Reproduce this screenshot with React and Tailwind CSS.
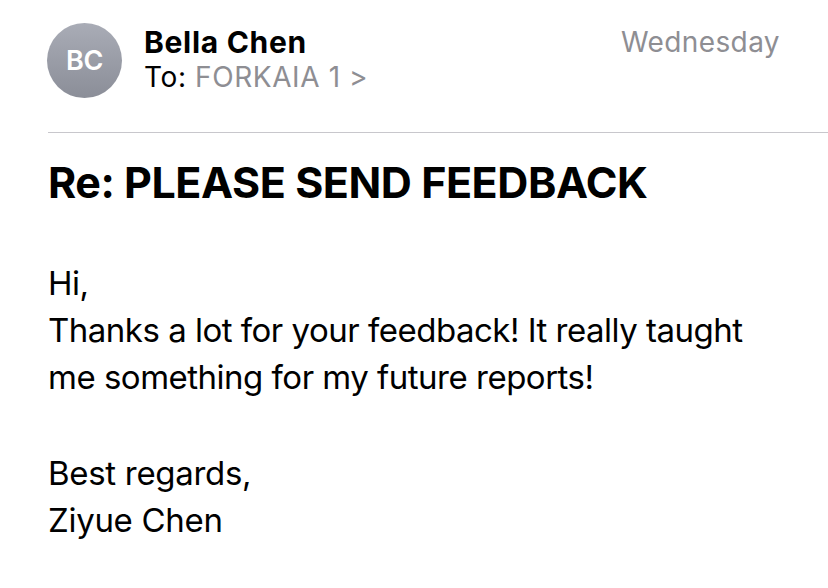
import React from "react";

export default function App() {
  return (
    <div className="w-[828px] h-[588px] bg-white overflow-hidden text-black" style={{ fontFamily: "Inter, 'Noto Sans', sans-serif" }}>
      <div className="flex items-start pl-[47px] pr-[48px] pt-[23px]">
        <div className="w-[75px] h-[75px] rounded-full bg-gradient-to-b from-[#a9acb6] to-[#8b8e98] flex items-center justify-center shrink-0">
          <span className="text-white text-[27px] font-semibold tracking-[-0.3px] leading-none">BC</span>
        </div>
        <div className="ml-[22px] flex-1 flex flex-col">
          <div className="text-[30px] font-bold leading-[30px] mt-[4px] tracking-[0.7px]">Bella Chen</div>
          <div className="text-[28px] leading-[28px] mt-[6px] tracking-[0.6px]">
            <span>To: </span>
            <span className="text-[#8e8e93]">FORKAIA 1 </span>
            <span className="text-[#8e8e93]">&gt;</span>
          </div>
        </div>
        <div className="text-[28px] leading-[28px] text-[#8e8e93] mt-[5px] tracking-[0.4px]">Wednesday</div>
      </div>
      <div className="ml-[48px] mt-[34px] h-px bg-[#c8c7cc]" />
      <div className="pl-[48px]">
        <div className="text-[43px] font-bold leading-[43px] mt-[28px] tracking-[-0.45px]">Re: PLEASE SEND FEEDBACK</div>
        <div className="mt-[56px] text-[33px] leading-[47px] tracking-[-0.5px]">
          <div>Hi,</div>
          <div>Thanks a lot for your feedback! It really taught</div>
          <div>me something for my future reports!</div>
        </div>
        <div className="mt-[49px] text-[33px] leading-[47px] tracking-[-0.3px]">
          <div>Best regards,</div>
          <div>Ziyue Chen</div>
        </div>
      </div>
    </div>
  );
}
